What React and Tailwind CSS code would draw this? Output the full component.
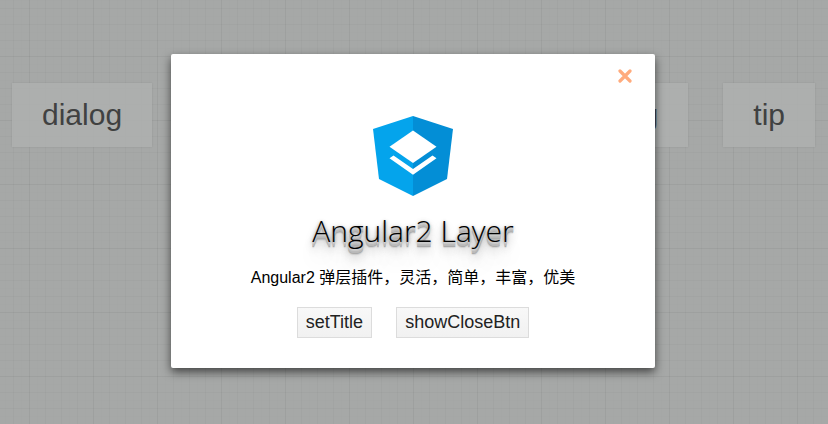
const gridLines =
  "bg-[linear-gradient(90deg,rgba(0,0,0,0.025)_1px,transparent_1px),linear-gradient(rgba(0,0,0,0.025)_1px,transparent_1px),linear-gradient(90deg,rgba(0,0,0,0.02)_1px,transparent_1px),linear-gradient(rgba(0,0,0,0.02)_1px,transparent_1px),linear-gradient(90deg,rgba(0,0,0,0.008)_1px,transparent_1px),linear-gradient(rgba(0,0,0,0.008)_1px,transparent_1px)] bg-[length:64px_64px,64px_64px,16px_16px,16px_16px,8px_8px,8px_8px] bg-[position:29px_0,0_56px,13px_0,0_8px,5px_0,0_0]";

function DemoButton({ children }) {
  return (
    <button className="h-16 bg-[#aeb0af]/85 px-[30px] pb-px text-[30px] leading-[62px] text-[#404141] shadow-[0_0_2px_rgba(0,0,0,0.1)]">
      {children}
    </button>
  );
}

function SmallButton({ children }) {
  return (
    <button className="h-[31px] border border-[#dcdcdc] bg-linear-to-b from-[#f8f8f8] to-[#f1f1f1] px-2 text-[18px] leading-[29px] text-[#222]">
      {children}
    </button>
  );
}

function Logo() {
  return (
    <svg width="82" height="82" viewBox="0 0 82 82" aria-hidden="true">
      <path d="M41 1 1 14l6 50 34 17z" fill="#04a4ec" />
      <path d="m41 1 40 13-6 50-34 17z" fill="#038ed6" />
      <path d="m41 15.500 23.500 16.200L41 48 17.500 31.700z" fill="#fff" />
      <path d="m21.500 40.500 19.500 13.500 19.500-13.500 4 2.700L41 59.800 17.500 43.200z" fill="#fff" />
    </svg>
  );
}

export default function App() {
  return (
    <div className={`relative h-[424px] w-[828px] overflow-hidden bg-[#a6a8a7] font-['Liberation_Sans','Noto_Sans_CJK_SC',sans-serif] ${gridLines}`}>
      <div className="flex justify-between pt-[83px] pr-[13px] pl-3">
        <DemoButton>dialog</DemoButton>
        <div className="flex gap-[35px]">
          <DemoButton>loading</DemoButton>
          <DemoButton>tip</DemoButton>
        </div>
      </div>

      <div className="absolute top-[54px] left-[171px] flex h-[314px] w-[484px] flex-col items-center rounded-[2px] bg-white shadow-[0_4px_10px_rgba(0,0,0,0.6)]">
        <button className="absolute top-[15px] right-[23px]" aria-label="close">
          <svg width="14" height="14" viewBox="0 0 14 14" className="block">
            <path d="m2 2 10 10M12 2 2 12" stroke="#ffab7d" strokeWidth="3.200" strokeLinecap="round" />
          </svg>
        </button>
        <div className="mt-[61px]">
          <Logo />
        </div>
        <h1 className="mt-[13px] h-[42px] font-['Open_Sans'] text-[30px] leading-[42px] font-light text-black [text-shadow:0_1px_0_#ccc,0_2px_0_#c9c9c9,0_3px_0_#bbb,0_4px_0_#b9b9b9,0_5px_0_#aaa,0_6px_1px_rgba(0,0,0,.1),0_0_5px_rgba(0,0,0,.1),0_1px_3px_rgba(0,0,0,.3),0_3px_5px_rgba(0,0,0,.2),0_5px_10px_rgba(0,0,0,.25),0_10px_10px_rgba(0,0,0,.2),0_20px_20px_rgba(0,0,0,.15)]">
          Angular2 Layer
        </h1>
        <p className="mt-[14px] h-6 text-base leading-6 whitespace-nowrap text-black">
          Angular2 弹层插件，灵活，简单，丰富，优美
        </p>
        <div className="mt-[17px] flex gap-6">
          <SmallButton>setTitle</SmallButton>
          <SmallButton>showCloseBtn</SmallButton>
        </div>
      </div>
    </div>
  );
}
